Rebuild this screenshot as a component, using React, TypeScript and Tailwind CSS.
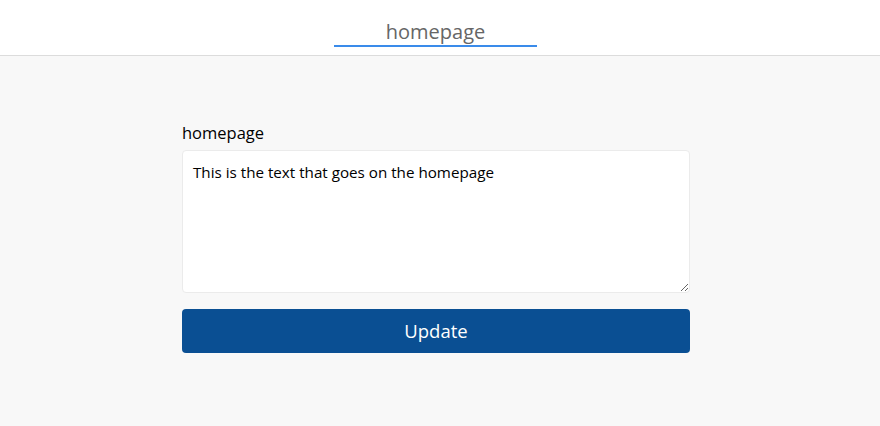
import React, { useState } from 'react';

export default function App() {
    const [text, setText] = useState('This is the text that goes on the homepage');

    return (
        <div className="min-h-screen w-full bg-[#f8f8f8] font-['Open_Sans',sans-serif] text-black">
            {/* Tabs */}
            <div className="h-[56px] bg-white border-b border-[#dcdcdc] flex justify-center pr-[9px]">
                <div className="w-[203px] h-[47px] border-b-2 border-[#3a8bea] flex items-end justify-center">
                    <span className="text-[20px] leading-[26px] text-[#666666]">homepage</span>
                </div>
            </div>

            {/* Editor */}
            <div className="pr-[8px]">
                <div className="w-[508px] mx-auto pt-[65px]">
                    <label className="block text-[16.5px] leading-[24px] mb-[5px]">homepage</label>
                    <textarea
                        value={text}
                        onChange={e => setText(e.target.value)}
                        className="block w-full h-[143px] bg-white border border-[#ebebeb] rounded-[4px] px-[10px] py-[10px] text-[15.2px] leading-[22px] outline-none"
                    />
                    <button className="mt-[16px] w-full h-[44px] rounded-[4px] bg-[#0a4f93] text-white text-[18.5px] leading-[28px]">
                        Update
                    </button>
                </div>
            </div>
        </div>
    );
}
